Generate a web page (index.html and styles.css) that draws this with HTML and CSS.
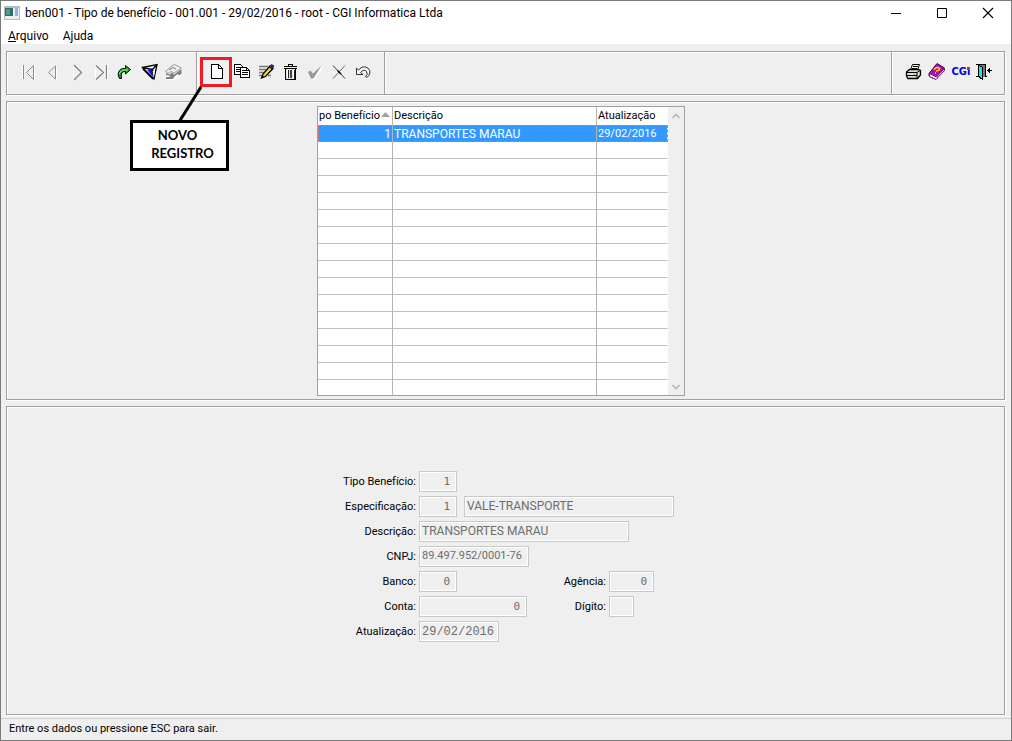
FILE: index.html
```html
<!DOCTYPE html>
<html lang="pt-BR">
<head>
<meta charset="utf-8">
<title>ben001 - Tipo de benefício</title>
<link rel="stylesheet" href="styles.css">
</head>
<body>
<div class="window">
  <header class="titlebar">
    <svg class="app-icon" width="16" height="14" viewBox="0 0 16 14" shape-rendering="crispEdges">
      <rect width="16" height="14" fill="#b4bcc0"/><rect x="1" y="2" width="14" height="11" fill="#e8eef2"/>
      <rect x="1" y="2" width="8" height="8" fill="#2f6f6a"/><rect x="2" y="3" width="4" height="6" fill="#4f9a7c"/><rect x="11" y="2" width="3" height="8" fill="#8fb4d8"/>
    </svg>
    <h1 class="title">ben001 - Tipo de benefício - 001.001 - 29/02/2016 - root - CGI Informatica Ltda</h1>
    <div class="window-buttons">
      <button class="window-button" aria-label="Minimizar"><svg width="12" height="12" viewBox="0 0 12 12"><path d="M1 6.500H11" stroke="#000"/></svg></button>
      <button class="window-button" aria-label="Maximizar"><svg width="12" height="12" viewBox="0 0 12 12"><path d="M1.500 1.500H10.500V10.500H1.500Z" fill="none" stroke="#000"/></svg></button>
      <button class="window-button" aria-label="Fechar"><svg width="12" height="12" viewBox="0 0 12 12"><path d="M1 1L11 11M11 1L1 11" stroke="#000" stroke-width="1.100"/></svg></button>
    </div>
  </header>
  <nav class="menubar">
    <button class="menu"><u>A</u>rquivo</button>
    <button class="menu">Ajuda</button>
  </nav>

  <main class="content">
    <div class="toolbar etched">
      <div class="tools">
        <button class="tool" aria-label="Primeiro"><svg viewBox="0 0 24 24"><path d="M6.500 5V20M18.500 5V20" stroke="#fff"/><path d="M7.500 5V19M17.500 5.500V19.500L10.500 12.500Z" fill="none" stroke="#8c8c8c"/></svg></button>
        <button class="tool" aria-label="Anterior"><svg viewBox="0 0 24 24"><path d="M16.500 6V20" stroke="#fff"/><path d="M15.500 6V19M15.500 6L8.500 12.500L15.500 19" fill="none" stroke="#8c8c8c"/></svg></button>
        <button class="tool" aria-label="Próximo"><svg viewBox="0 0 24 24"><path d="M9.500 6V19" stroke="#fff"/><path d="M10 5L17.500 12.500L10 20" fill="none" stroke="#7c7c7c" stroke-width="1.200"/></svg></button>
        <button class="tool" aria-label="Último"><svg viewBox="0 0 24 24"><path d="M7.500 6V19M19.500 5V20" stroke="#fff"/><path d="M8 5.500L15.500 12.500L8 19.500M18.500 5V19" fill="none" stroke="#7c7c7c" stroke-width="1.100"/></svg></button>
        <button class="tool" aria-label="Atualizar"><svg viewBox="0 0 24 24"><path d="M7.500 18.500Q4.500 13 8.500 9.500Q10.500 8 13.500 8.500V5.500L18.500 9.500L13.500 14V11.500Q8 11 9.500 18.500Z" fill="#12b012" stroke="#000"/><path d="M7.500 14Q8 10 13 10H16" fill="none" stroke="#9cf09c"/></svg></button>
        <button class="tool" aria-label="Filtrar"><svg viewBox="0 0 24 24"><path d="M6.500 7.500L21 4.500L18 19Z" fill="#fff" stroke="#000" stroke-width="1.300"/><path d="M11 9.500L17 10L17.500 18Z" fill="#1414f0"/><path d="M6 7.500L16.500 9.500L21 4.500M16.500 9.500V13M7 9L17 19" fill="none" stroke="#000" stroke-width="1.500"/><path d="M16.500 11H19L18 17Z" fill="#e8e8e8"/></svg></button>
        <button class="tool" aria-label="Limpar"><svg viewBox="0 0 24 24"><path d="M6 12L12 5.500L14.500 4.500L22 8V15L14 20H6Z" fill="#fff"/><path d="M5.500 11.500L12.500 5.500L14.500 4.500L21.500 8L14 13L11 11.500L8 13.500Z" fill="#eee" stroke="#999"/><path d="M6 13L9 14.500L12 12.500L14 14.500L21.500 9V14L19 15.500L18 14L15 16L13 19H6V17H9L10.500 16L6 15Z" fill="#808080"/><path d="M9 10L13 7.500L16 9" fill="none" stroke="#999" stroke-width="1.200"/></svg></button>
      </div>
      <div class="tools divided">
        <button class="tool" aria-label="Novo registro"><svg viewBox="0 0 24 24" shape-rendering="crispEdges"><path d="M6.500 4.500H13.500L17.500 8.500V18.500H6.500Z" fill="#fff" stroke="#000"/><path d="M13.500 4.500V8.500H17.500" fill="none" stroke="#000"/></svg></button>
        <button class="tool" aria-label="Copiar"><svg viewBox="0 0 24 24" shape-rendering="crispEdges"><path d="M5.500 4.500H11.500L13.500 6.500V14.500H5.500Z" fill="#fff" stroke="#000"/><path d="M7 7.500H11M7 9.500H11M7 11.500H11" stroke="#000"/><path d="M11.500 7.500H17.500L20.500 10.500V17.500H11.500Z" fill="#fff" stroke="#000"/><path d="M13 10.500H17M13 12.500H19M13 14.500H19M17.500 7.500V10.500H20.500" fill="none" stroke="#000"/></svg></button>
        <button class="tool" aria-label="Editar"><svg viewBox="0 0 24 24"><path d="M6 6.500H15M6 9.500H13M6 12.500H11M6 15.500H9M15 15.500H18" stroke="#777" stroke-width="1.500"/><path d="M8.500 18L10 14L17 6L20 8.500L12.500 16.500Z" fill="#f0e020" stroke="#000" stroke-width="1.300"/><path d="M16 7L18.500 4.500L21 6L19 9Z" fill="#6a1080" stroke="#000" stroke-width=".7"/><path d="M8 18.500L9.500 15.500L11.500 17Z" fill="#000"/></svg></button>
        <button class="tool" aria-label="Excluir"><svg viewBox="0 0 24 24" shape-rendering="crispEdges"><path d="M8.500 8.500H18.500V19.500H8.500Z" fill="#e0e0e0" stroke="#000"/><path d="M7 6.500H20M11.500 6V4.500H15.500V6M7 8.500H20" fill="none" stroke="#000"/><path d="M10.500 10V19M16.500 10V19" stroke="#fff"/><path d="M11.500 10V18M17 10V19" stroke="#222"/><path d="M14 10V18" stroke="#444" stroke-width="2"/></svg></button>
        <button class="tool" aria-label="Confirmar"><svg viewBox="0 0 24 24"><path d="M8 13L10.500 11.500L13 14L21 6.500L22 8L13 19.500H11Z" fill="#fff"/><path d="M7 12L9.500 10.500L12 13.500L20.500 5.500L12.500 18.500H10Z" fill="#999"/></svg></button>
        <button class="tool" aria-label="Cancelar"><svg viewBox="0 0 24 24"><path d="M8 5.500L20 18.500" stroke="#333"/><path d="M20 5.500L8 18.500" stroke="#666"/><path d="M12.500 10.500L16 14" stroke="#000" stroke-width="1.500"/></svg></button>
        <button class="tool" aria-label="Desfazer"><svg viewBox="0 0 24 24"><path d="M7.500 8V14.500H14L11.500 12.500Q15 8.500 17.500 11.500Q19.500 14.500 16.500 16.500L18 17.500Q23 13 19.500 8.500Q14.500 4.500 9.500 10Z" fill="#f4f4f4" stroke="#333"/></svg></button>
      </div>
      <div class="tools divided tools-end">
        <button class="tool" aria-label="Imprimir"><svg viewBox="0 0 24 24"><path d="M9.500 10L11.500 4.500H18.500L16.500 10Z" fill="#fff" stroke="#000"/><path d="M12 6.500H17M11 8.500H16" stroke="#000"/><path d="M5.500 12L8.500 9.500H17L19.500 10.500V15L16.500 18.500H7L5.500 16Z" fill="#ddd" stroke="#000" stroke-width="1.300"/><path d="M6 12.500H16V18M6 15.500H16M16 12.500L19 10.500" fill="none" stroke="#000"/><path d="M12 14H15" stroke="#dddd20" stroke-width="1.500"/></svg></button>
        <button class="tool" aria-label="Manual"><svg viewBox="0 0 24 24"><path d="M4 13.500L12 3.500L19.500 8L11.500 18.500H8.500L4 16Z" fill="#b010b0" stroke="#400040"/><path d="M4.500 13.500L11.500 17L19.500 8.500V10.500L11 19.500L4.500 16.500Z" fill="#fff" stroke="#701070"/><path d="M9 9.500Q12 6 14.500 8.500Q15 10.500 11 11M10 13H11" stroke="#f4e020" stroke-width="1.500" fill="none"/></svg></button>
        <button class="tool" aria-label="CGI"><span class="cgi">CGi</span></button>
        <button class="tool" aria-label="Sair"><svg viewBox="0 0 24 24" shape-rendering="crispEdges"><path d="M3 4.500H13M5.500 4V16M3 16.500H14M12.500 4V17" stroke="#000" fill="none"/><path d="M6 5H12V17H6Z" fill="#777"/><path d="M5 5L9 7V19L5 16Z" fill="#20e0e0" stroke="#000"/><path d="M14 10.500H19" stroke="#000" stroke-width="1.500"/><path d="M14 10.500L17 7.500V13.500Z" fill="#000"/></svg></button>
      </div>
    </div>

    <section class="list-panel etched">
      <div class="list">
        <table class="grid">
          <colgroup><col class="col-code"><col><col class="col-date"></colgroup>
          <thead><tr><th>po Benefício<svg class="sort" viewBox="0 0 9 5"><path d="M0 5L4.500 0L9 5Z" fill="#a0a0a0"/></svg></th><th>Descrição</th><th>Atualização</th></tr></thead>
          <tbody>
            <tr class="selected"><td class="number">1</td><td>TRANSPORTES MARAU</td><td class="short">29/02/2016</td></tr>
            <tr><td></td><td></td><td></td></tr><tr><td></td><td></td><td></td></tr>
            <tr><td></td><td></td><td></td></tr><tr><td></td><td></td><td></td></tr>
            <tr><td></td><td></td><td></td></tr><tr><td></td><td></td><td></td></tr>
            <tr><td></td><td></td><td></td></tr><tr><td></td><td></td><td></td></tr>
            <tr><td></td><td></td><td></td></tr><tr><td></td><td></td><td></td></tr>
            <tr><td></td><td></td><td></td></tr><tr><td></td><td></td><td></td></tr>
            <tr><td></td><td></td><td></td></tr><tr><td></td><td></td><td></td></tr>
            <tr class="last"><td></td><td></td><td></td></tr>
          </tbody>
        </table>
        <div class="scroll">
          <button class="scroll-button" aria-label="Rolar para cima"><svg width="8" height="6" viewBox="0 0 8 6"><path d="M0.500 5L4 1.500L7.500 5" fill="none" stroke="#b8b8b8" stroke-width="1.600"/></svg></button>
          <button class="scroll-button" aria-label="Rolar para baixo"><svg width="8" height="6" viewBox="0 0 8 6"><path d="M0.500 1L4 4.500L7.500 1" fill="none" stroke="#b8b8b8" stroke-width="1.600"/></svg></button>
        </div>
      </div>
    </section>

    <section class="form-panel etched">
      <form class="form">
        <label for="tipo">Tipo Benefício:</label>
        <div class="fields"><input id="tipo" class="field code" value="1" readonly></div>
        <label for="espec">Especificação:</label>
        <div class="fields"><input id="espec" class="field code" value="1" readonly><input class="field wide" aria-label="Nome da especificação" value="VALE-TRANSPORTE" readonly></div>
        <label for="descricao">Descrição:</label>
        <div class="fields"><input id="descricao" class="field wide" value="TRANSPORTES MARAU" readonly></div>
        <label for="cnpj">CNPJ:</label>
        <div class="fields"><input id="cnpj" class="field cnpj" value="89.497.952/0001-76" readonly></div>
        <label for="banco">Banco:</label>
        <div class="fields"><input id="banco" class="field code" value="0" readonly>
          <div class="side"><label for="agencia">Agência:</label><input id="agencia" class="field code agency" value="0" readonly></div></div>
        <label for="conta">Conta:</label>
        <div class="fields"><input id="conta" class="field code account" value="0" readonly>
          <div class="side"><label for="digito">Dígito:</label><input id="digito" class="field digit" readonly></div></div>
        <label for="atualizacao">Atualização:</label>
        <div class="fields"><input id="atualizacao" class="field date" value="29/02/2016" readonly></div>
      </form>
    </section>
  </main>
  <footer class="status">Entre os dados ou pressione ESC para sair.</footer>

  <div class="highlight"></div>
  <svg class="pointer" width="30" height="40" viewBox="0 0 30 40"><path d="M26 2L4 37" stroke="#000" stroke-width="3"/></svg>
  <div class="callout"><span>NOVO</span><span class="callout-second">REGISTRO</span></div>
</div>
</body>
</html>
```
FILE: styles.css
```css
* { box-sizing: border-box; }
body { margin: 0; font: 11px/16px Roboto, "Liberation Sans", sans-serif; color: #000; }
button { border: 0; background: none; padding: 0; font: inherit; color: inherit; }
.window { position: relative; display: flex; flex-direction: column; min-height: 100vh; border: 1px solid #7a7a7a; background: #efefef; }
.titlebar { display: flex; align-items: center; height: 24px; padding-left: 3px; background: #fff; }
.app-icon { margin-right: 5px; }
.title { margin: 0; flex: 1; font: 12px/16px Roboto, sans-serif; white-space: nowrap; }
.window-buttons { display: flex; }
.window-button { display: flex; align-items: center; justify-content: center; width: 46px; height: 24px; }
.menubar { display: flex; gap: 14px; height: 19px; padding-left: 7px; background: #fff; font: 12px/20px Roboto, sans-serif; }
.menu { line-height: 22px; }
.content { flex: 1; display: flex; flex-direction: column; gap: 6px; padding: 7px 6px 3px 5px; }
.etched { border: 1px solid #a0a0a0; box-shadow: inset 1px 1px #fff, 1px 1px #fff; }
.toolbar { display: flex; height: 44px; }
.tools { display: flex; align-items: center; padding: 0 12px 2px 9px; }
.tools.divided { border-left: 1px solid #a0a0a0; box-shadow: inset 1px 0 #fff; padding: 0 11px 2px 8px; }
.tools.tools-end { margin-left: auto; padding: 0 7px 2px 9px; }
.tools:nth-child(2) { border-right: 1px solid #a0a0a0; box-shadow: inset 1px 0 #fff, 1px 0 #fff; }
.tool { width: 24px; height: 24px; display: flex; align-items: center; justify-content: center; }
.tool svg { width: 24px; height: 24px; }
.cgi { position: relative; font: bold 11px/16px "DejaVu Sans Condensed", "Liberation Sans", sans-serif; color: #00e; }
.cgi::after { content: ""; position: absolute; right: 0; top: 3px; width: 3px; height: 3px; background: #f02020; }
.list-panel { display: flex; justify-content: center; padding: 4px 9px 3px 0; }
.list { display: flex; width: 368px; border: 1px solid #a0a0a0; background: #fff; }
.grid { flex: 1; table-layout: fixed; border-collapse: separate; border-spacing: 0; width: 100%; }
.col-code { width: 75px; }
.col-date { width: 71px; }
.grid th, .grid td { height: 17px; padding: 0 1px; line-height: 16px; border-bottom: 1px solid #c0c0c0; border-right: 1px solid #b4b4b4; overflow: hidden; white-space: nowrap; }
.grid th { height: 18px; font-weight: 400; text-align: left; border-bottom: 0; }
.grid th:last-child, .grid td:last-child { border-right-color: #fff; }
.grid .last td { height: 15px; border-bottom: 0; }
.grid .selected { outline: 1px dashed #ff6a4a; outline-offset: -1px; }
.grid .selected td { background: #3399ff; color: #fff; border-bottom: 0; font-size: 12px; }
.grid .selected .short { font-size: 11px; }
.grid .number { text-align: right; }
.sort { width: 9px; height: 5px; margin-left: 1px; vertical-align: 2px; }
.scroll { display: flex; flex-direction: column; justify-content: space-between; width: 16px; background: #efefef; }
.scroll-button { height: 17px; display: flex; align-items: center; justify-content: center; }
.form-panel { flex: 1; padding-top: 64px; }
.form { display: grid; grid-template-columns: 79px 255px; column-gap: 3px; row-gap: 4px; justify-content: center; }
.form label { text-align: right; line-height: 22px; white-space: nowrap; height: 21px; }
.fields { display: flex; gap: 7px; }
.field { width: 38px; height: 21px; margin: 0; padding: 0 2px 2px; border: 1px solid #c8c8c8; border-radius: 0; box-shadow: inset 0 0 0 1px #fff; background: #efefef; color: #6d6d6d; font: inherit; outline: 0; }
.field.code, .field.date { padding-bottom: 0; font: 11px/16px "DejaVu Sans Mono", monospace; }
.field.code { text-align: right; padding-right: 6px; }
.field.wide { width: 210px; font-size: 12px; }
.field.cnpj { width: 110px; }
.field.agency { width: 45px; }
.field.account { width: 108px; }
.field.digit { width: 25px; }
.field.date { width: 80px; font: 12px/16px "Liberation Mono", monospace; }
.side { display: grid; grid-template-columns: auto 65px; column-gap: 3px; margin-left: auto; }
.status { padding: 2px 8px 3px; border-top: 1px solid #d0d0d0; }
.highlight { position: absolute; left: 199px; top: 56px; width: 32px; height: 30px; border: 3px solid #ed1c24; }
.pointer { position: absolute; left: 174px; top: 84px; }
.callout { position: absolute; left: 129px; top: 119px; width: 99px; display: flex; flex-direction: column; padding: 3px 0 6px; border: 3px solid #000; background: #fff; font: bold 13px/18px Lato, sans-serif; text-align: center; }
.callout > span { padding-right: 4px; }
.callout .callout-second { padding: 0 0 0 6px; }
```
